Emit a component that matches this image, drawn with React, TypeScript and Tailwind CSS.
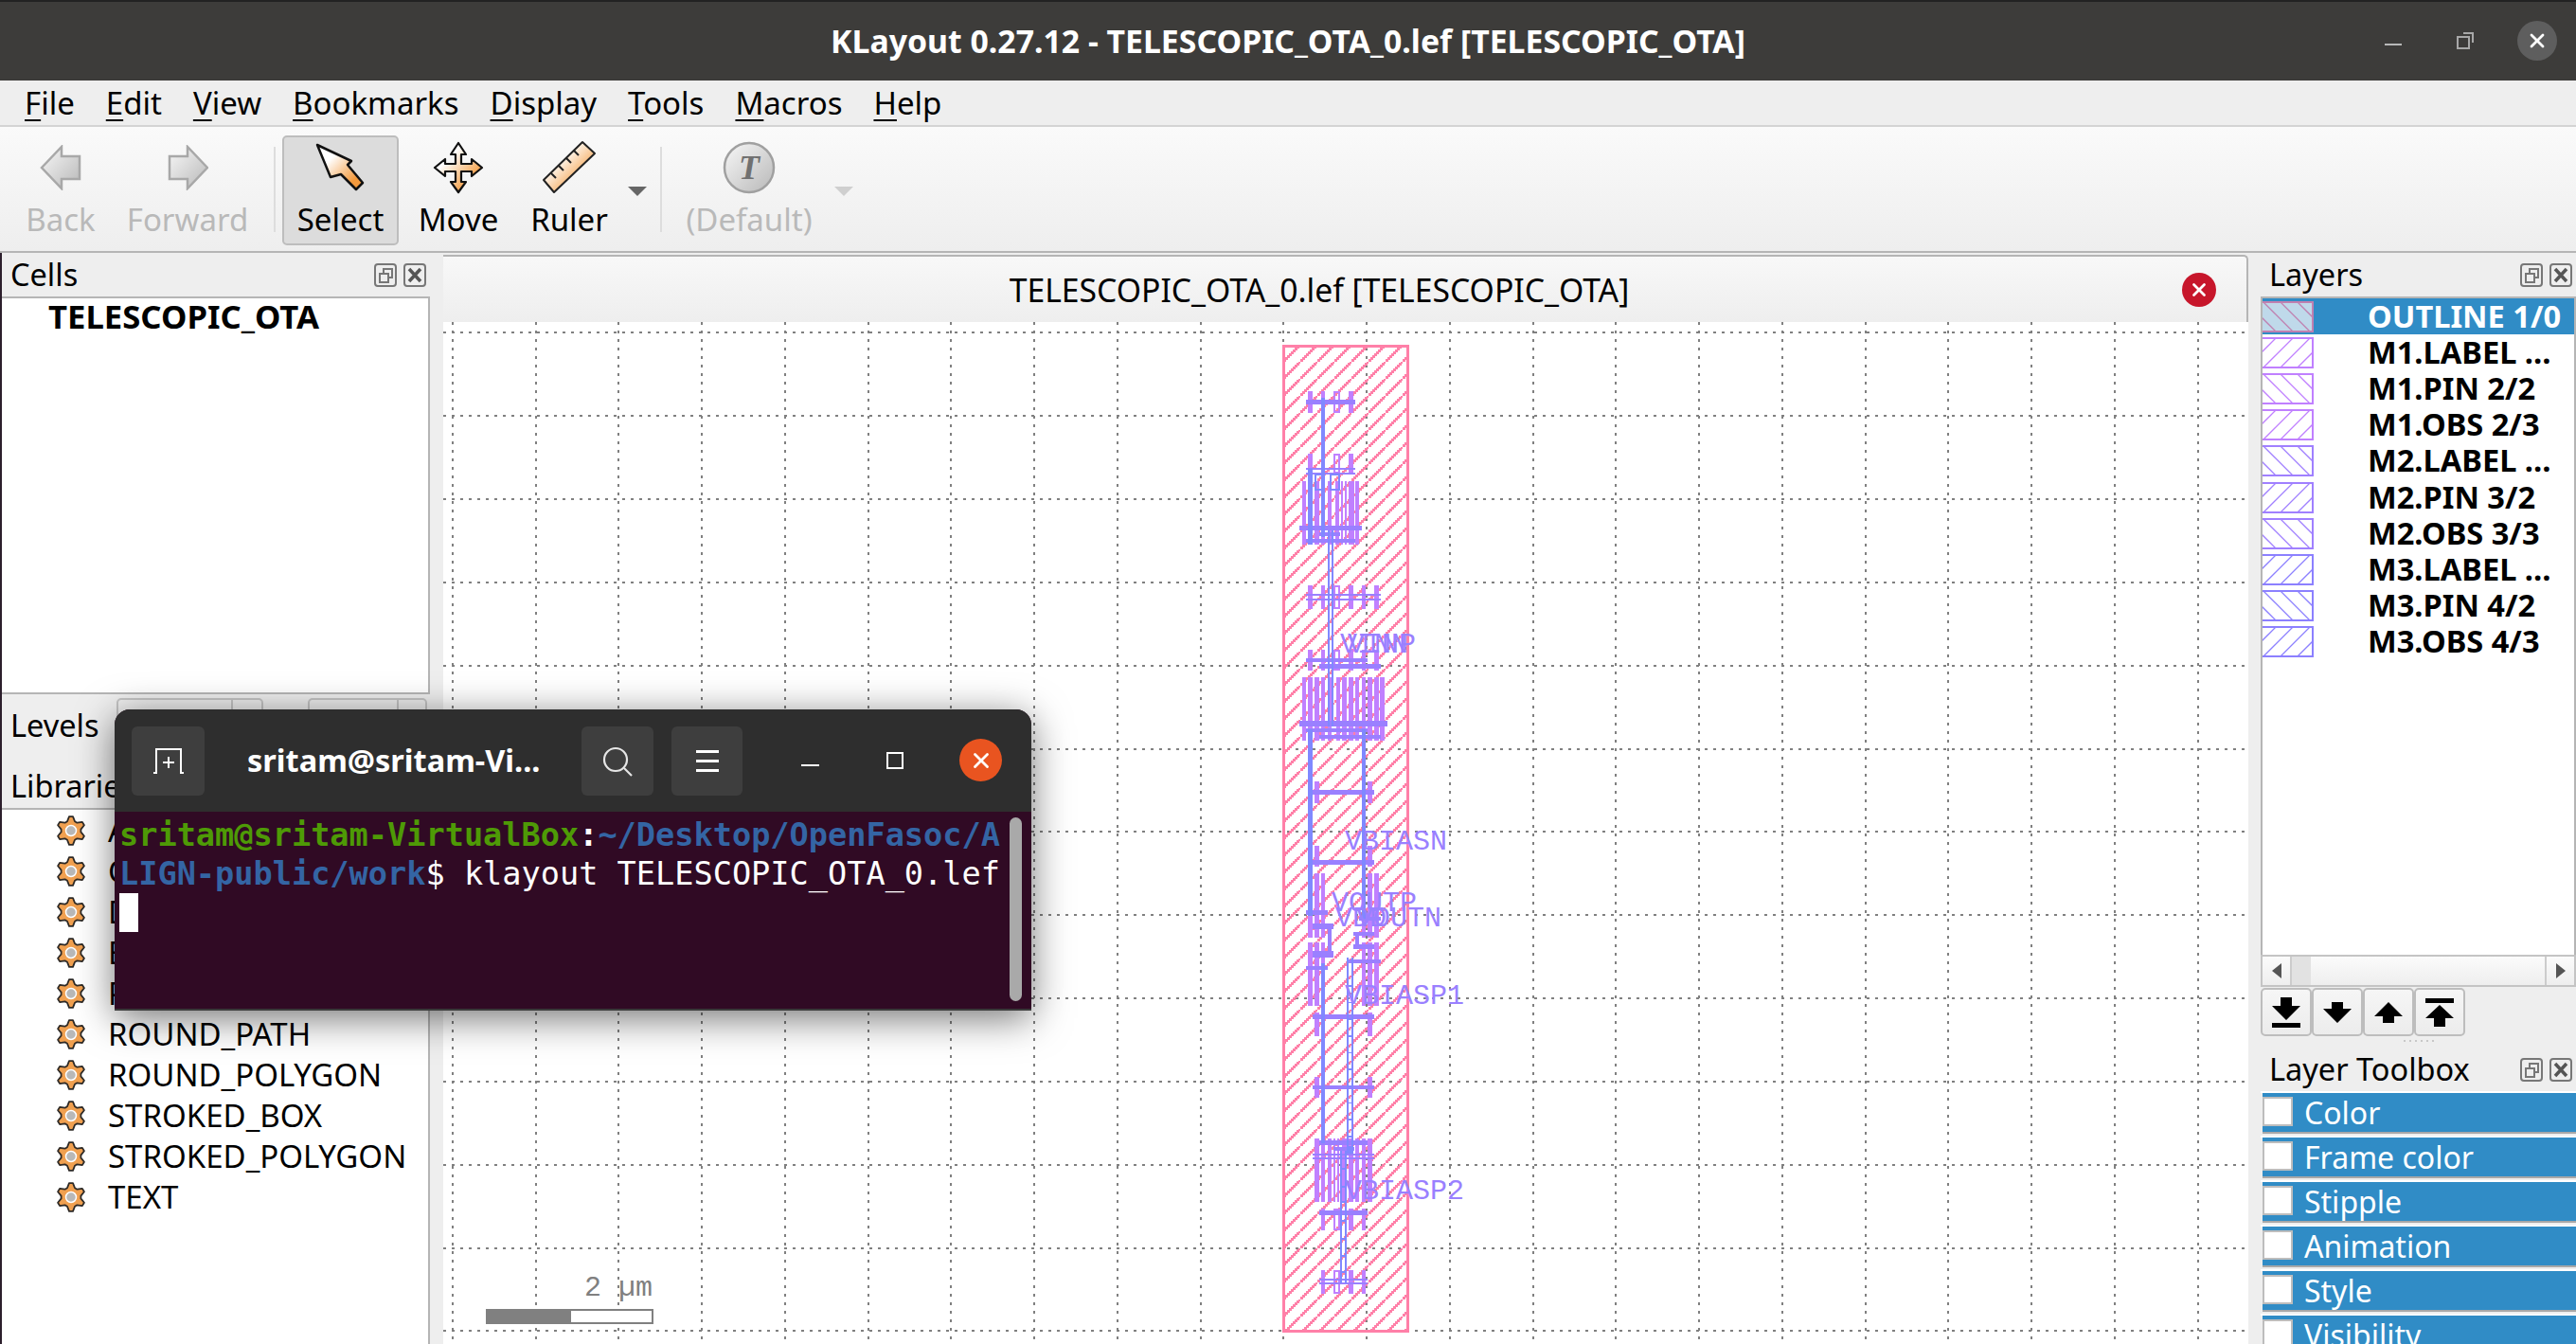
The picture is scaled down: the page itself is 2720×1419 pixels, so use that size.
import { X } from "lucide-react";

type Box = [number, number, number, number];

const M1 = "#c080ff";
const M2 = "#9a80ff";
const M3 = "#8088ff";

// layout shapes, coordinates are in 3x crop pixels [x1, x2, y1, y2]
const bars = (xs: [number, number][], y1: number, y2: number): Box[] =>
  xs.map(([a, b]) => [a, b, y1, y2]);

const top = {
  offset: 340,
  m1: [
    ...bars([[243, 258], [285, 297], [372, 387]], 219, 288),
    ...bars([[243, 258], [372, 387]], 417, 480),
    ...bars([[225, 238], [243, 258], [264, 280], [285, 297], [306, 318], [330, 342], [348, 354], [360, 366], [372, 390], [393, 405]], 504, 705),
    ...bars([[243, 258], [285, 297], [372, 387], [414, 426], [453, 468]], 834, 909),
    ...bars([[243, 258], [285, 297], [372, 387], [414, 426], [453, 468]], 1038, 1104),
  ] as Box[],
  hollow1: [[324, 345, 219, 288], [324, 345, 417, 480], [324, 345, 834, 909], [324, 345, 1038, 1104]] as Box[],
  m2: [
    [237, 393, 246, 261], [237, 393, 462, 468], [237, 393, 477, 483], [216, 414, 645, 660], [237, 393, 687, 699], [279, 345, 666, 678],
    [237, 474, 861, 867], [237, 474, 876, 882], [237, 432, 1065, 1077], [279, 474, 1083, 1098],
  ] as Box[],
  m3: [[285, 297, 240, 530], [243, 258, 465, 705], [285, 297, 465, 680], [306, 312, 660, 1020], [318, 324, 660, 1020]] as Box[],
  hollow3: [[264, 297, 480, 534], [312, 345, 480, 534]] as Box[],
};

const mid = {
  offset: 680,
  m1: [
    ...bars([[225, 238], [243, 258], [264, 280], [285, 297], [306, 318], [333, 345], [351, 366], [372, 387], [393, 405], [414, 426], [432, 447], [453, 468], [472, 486]], 105, 305),
    ...bars([[264, 279], [432, 447]], 435, 504),
    ...bars([[264, 279], [432, 447]], 640, 705),
    ...bars([[243, 258], [264, 279], [285, 297], [414, 426], [432, 447], [453, 468]], 726, 930),
    ...bars([[243, 258], [264, 279], [285, 297], [414, 426], [432, 447], [453, 468]], 945, 1146),
  ] as Box[],
  hollow1: [] as Box[],
  m2: [
    [216, 495, 243, 261], [237, 432, 267, 279], [279, 474, 288, 300], [258, 453, 462, 477], [258, 453, 684, 699],
    [237, 306, 843, 858], [405, 474, 864, 876], [258, 324, 885, 903], [387, 453, 912, 924],
    [258, 324, 972, 993], [387, 453, 951, 966], [237, 306, 1020, 1032], [366, 474, 999, 1011], [306, 318, 900, 975], [393, 405, 924, 951],
  ] as Box[],
  m3: [[306, 312, 0, 260], [318, 324, 0, 260], [243, 258, 270, 860], [414, 426, 270, 870], [285, 297, 1010, 1200], [366, 372, 993, 1200], [381, 387, 993, 1200]] as Box[],
  hollow3: [] as Box[],
};

const low = {
  offset: 1020,
  m1: [
    ...bars([[264, 279], [432, 447]], 148, 222),
    ...bars([[264, 279], [432, 447]], 351, 417),
    ...bars([[264, 279], [285, 297], [306, 318], [324, 330], [336, 342], [351, 366], [372, 387], [393, 405], [414, 426], [432, 447]], 546, 747),
    ...bars([[285, 297], [372, 387], [414, 426]], 768, 837),
    ...bars([[285, 297], [372, 387], [414, 426]], 963, 1038),
  ] as Box[],
  hollow1: [[324, 345, 768, 837], [324, 345, 963, 1038]] as Box[],
  m2: [
    [258, 453, 153, 168], [258, 453, 378, 390], [279, 432, 552, 567], [324, 390, 573, 585], [258, 453, 594, 600], [258, 453, 606, 612],
    [279, 432, 774, 789], [279, 432, 990, 996], [279, 432, 1002, 1008],
  ] as Box[],
  m3: [[285, 297, 0, 560], [366, 372, 0, 590], [381, 387, 0, 590], [345, 351, 585, 1005], [360, 366, 585, 1005], [366, 387, 570, 594]] as Box[],
  hollow3: [] as Box[],
};

const ladder = [...Array(11).keys()].map((i) => 60 + i * 53);

function Rects({ items, fill }: { items: Box[]; fill: string }) {
  return (
    <>
      {items.map(([a, b, c, d], i) => (
        <rect key={i} x={a} y={c} width={b - a} height={d - c} fill={fill} />
      ))}
    </>
  );
}

function Hollow({ items, stroke }: { items: Box[]; stroke: string }) {
  return (
    <>
      {items.map(([a, b, c, d], i) => (
        <rect key={i} x={a + 3} y={c + 3} width={b - a - 6} height={d - c - 6} fill="none" stroke={stroke} strokeWidth={6} />
      ))}
    </>
  );
}

function Canvas() {
  const vertical = [...Array(22).keys()].map((k) => Math.round(477.8 + 87.75 * k));
  const horizontal = [...Array(13).keys()].map((k) => Math.round(351.3 + 87.85 * k));
  const steps = [...Array(9).keys()];
  return (
    <svg viewBox="468 340 1906 1079" className="block h-[1079px] w-[1906px]" shapeRendering="crispEdges">
      <defs>
        <pattern id="outline" x="1355" y="364" width="18" height="18" patternUnits="userSpaceOnUse">
          {steps.map((i) => (
            <rect key={i} x={i * 2} y={15 - i * 2} width="3" height="3" fill="#ff80a8" />
          ))}
        </pattern>
      </defs>
      <rect x="468" y="340" width="1906" height="1079" fill="#ffffff" />
      {horizontal.map((y) => (
        <line key={y} x1="468" x2="2374" y1={y} y2={y} stroke="#808080" strokeWidth="2" strokeDasharray="3 6" />
      ))}
      <rect x="1348" y="400" width="146" height="240" fill="#ffffff" />
      {vertical.map((x) => (
        <line key={x} x1={x} x2={x} y1="340" y2="1419" stroke="#808080" strokeWidth="2" strokeDasharray="3 6" />
      ))}
      <rect x="1355" y="365" width="131" height="1040" fill="url(#outline)" stroke="#ff80a8" strokeWidth="3" />

      {[top, mid, low].map((g) => (
        <g key={g.offset} transform={`translate(1300 ${g.offset}) scale(0.3333)`}>
          <Rects items={g.m1} fill={M1} />
          <Hollow items={g.hollow1} stroke={M1} />
          <Rects items={g.m2} fill={M2} />
          <Rects items={g.m3} fill={M3} />
          <Hollow items={g.hollow3} stroke={M3} />
        </g>
      ))}
      <g transform="translate(1300 1020) scale(0.3333)">
        {ladder.map((y) => (
          <rect key={y} x="366" y={y} width="21" height="5" fill={M3} />
        ))}
        {[640, 695, 745, 805, 860, 915, 965].map((y) => (
          <rect key={y} x="345" y={y} width="21" height="6" fill={M3} />
        ))}
      </g>

      <g shapeRendering="auto" fontFamily="'Liberation Mono', monospace" fontSize="30" fill="#9a80ff">
        <text x="1415" y="689">VINN</text>
        <text x="1423" y="689">VINP</text>
        <text x="1420" y="897">VBIASN</text>
        <text x="1406" y="962">VOUTP</text>
        <text x="1410" y="978">VDD</text>
        <text x="1432" y="978">VOUTN</text>
        <text x="1420" y="1060">VBIASP1</text>
        <text x="1420" y="1266">VBIASP2</text>
      </g>

      <text x="617" y="1368" shapeRendering="auto" fontFamily="'Liberation Mono', monospace" fontSize="30" fill="#808080">2 µm</text>
      <rect x="514" y="1383" width="175" height="14" fill="#ffffff" stroke="#808080" strokeWidth="2" />
      <rect x="513" y="1382" width="90" height="16" fill="#808080" />
    </svg>
  );
}

function Mnemonic({ text }: { text: string }) {
  return (
    <span>
      <span className="underline decoration-2 underline-offset-[5px]">{text[0]}</span>
      {text.slice(1)}
    </span>
  );
}

function FloatButtons() {
  return (
    <div className="flex gap-[7px]">
      <svg width="24" height="25" viewBox="0 0 24 25" fill="none" stroke="#777777" strokeWidth="2">
        <rect x="1" y="1" width="22" height="23" rx="3" />
        <rect x="6" y="11" width="9" height="9" />
        <path d="M10 10V6h9v9h-4" />
      </svg>
      <svg width="24" height="25" viewBox="0 0 24 25" fill="none" stroke="#777777" strokeWidth="2">
        <rect x="1" y="1" width="22" height="23" rx="3" />
        <path d="M6 6l12 13M18 6L6 19" strokeWidth="3.5" stroke="#555555" />
      </svg>
    </div>
  );
}

function PanelTitle({ title }: { title: string }) {
  return (
    <div className="flex h-[46px] shrink-0 items-center justify-between pl-[9px] pr-[4px] text-[32.5px]">
      <span>{title}</span>
      <FloatButtons />
    </div>
  );
}

function Gear() {
  const pts: string[] = [];
  for (let i = 0; i < 24; i++) {
    const r = i % 4 < 2 ? 15 : 10.5;
    const a = ((i - 0.5) / 24) * Math.PI * 2 - Math.PI / 2;
    pts.push(`${(16 + r * Math.cos(a)).toFixed(1)},${(16 + r * Math.sin(a)).toFixed(1)}`);
  }
  return (
    <svg width="32" height="32" viewBox="0 0 32 32" className="shrink-0">
      <polygon points={pts.join(" ")} fill="#f0a050" stroke="#2e2a26" strokeWidth="1.8" strokeLinejoin="round" />
      <circle cx="16" cy="16" r="5.5" fill="#b8b8b8" stroke="#ffffff" strokeWidth="1.5" />
    </svg>
  );
}

function ToolButton({ label, width, active, disabled, ml, children }: { label: string; width: number; active?: boolean; disabled?: boolean; ml?: string; children: React.ReactNode }) {
  return (
    <div
      className={`flex h-[116px] shrink-0 flex-col items-center rounded-[5px] border-2 pt-[4px] ${ml ?? ""} ${active ? "border-[#bdbdbd] bg-[#dcdcdc]" : "border-transparent"} ${disabled ? "text-[#b9b9b9]" : "text-black"}`}
      style={{ width }}
    >
      <div className="flex h-[56px] items-center justify-center">{children}</div>
      <span className="mt-[7px] text-[33px] leading-[40px]">{label}</span>
    </div>
  );
}

function ArrowDefs() {
  return (
    <svg width="0" height="0" className="absolute">
      <defs>
        <linearGradient id="tool" x1="0" y1="0" x2="1" y2="1">
          <stop offset="0.3" stopColor="#ffffff" />
          <stop offset="0.8" stopColor="#f39a3d" />
        </linearGradient>
        <linearGradient id="gray" x1="0" y1="0" x2="1" y2="1">
          <stop offset="0" stopColor="#f8f8f8" />
          <stop offset="1" stopColor="#b8b8b8" />
        </linearGradient>
      </defs>
    </svg>
  );
}

function Toolbar() {
  return (
    <div className="flex h-[135px] items-start border-y-2 border-y-[#d4d4d4] border-b-[#b5b5b5] bg-gradient-to-b from-[#fafafa] to-[#eeeeee] pl-[18px] pt-[9px]">
      <ToolButton label="Back" width={92} disabled>
        <svg width="44" height="48" viewBox="41 153 44 48">
          <polygon points="43,177 64,155 64,165 83,165 83,189 64,189 64,199" fill="url(#gray)" stroke="#a8a8a8" strokeWidth="2.5" />
        </svg>
      </ToolButton>
      <ToolButton label="Forward" width={132} disabled ml="ml-[22px]">
        <svg width="44" height="48" viewBox="175 153 44 48">
          <polygon points="218,177 197,155 197,165 178,165 178,189 197,189 197,199" fill="url(#gray)" stroke="#a8a8a8" strokeWidth="2.5" />
        </svg>
      </ToolButton>
      <div className="ml-[25px] mt-[12px] h-[90px] w-[2px] shrink-0 bg-[#dddddd]" />
      <ToolButton label="Select" width={123} active ml="ml-[7px]">
        <svg width="56" height="54" viewBox="332 150 56 54">
          <polygon points="335,153 371,170 367,174 383,193 376,200 360,184 349,187" fill="url(#tool)" stroke="#111111" strokeWidth="2.5" strokeLinejoin="round" />
        </svg>
      </ToolButton>
      <ToolButton label="Move" width={122} ml="ml-[2px]">
        <svg width="56" height="56" viewBox="455 148 56 56">
          <polygon points="483,150 491,162 486,162 486,172 497,172 497,167 508,176 497,185 497,180 486,180 486,191 491,191 483,202 475,191 480,191 480,180 469,180 469,185 458,176 469,167 469,172 480,172 480,162 475,162" fill="url(#tool)" stroke="#111111" strokeWidth="2.2" strokeLinejoin="round" />
        </svg>
      </ToolButton>
      <ToolButton label="Ruler" width={112}>
        <svg width="58" height="58" viewBox="572 148 58 58">
          <polygon points="574,190 615,150 628,162 585,203" fill="url(#tool)" stroke="#222222" strokeWidth="2" strokeLinejoin="round" />
          <path d="M582 183l5 5M590 175l5 5M598 167l5 5M606 159l5 5" stroke="#222222" strokeWidth="2" />
        </svg>
      </ToolButton>
      <svg width="20" height="10" viewBox="0 0 20 10" className="ml-[6px] mt-[54px] shrink-0">
        <polygon points="0,0 20,0 10,10" fill="#666666" />
      </svg>
      <div className="ml-[14px] mt-[12px] h-[90px] w-[2px] shrink-0 bg-[#dddddd]" />
      <ToolButton label="(Default)" width={136} disabled ml="ml-[24px]">
        <svg width="56" height="56" viewBox="0 0 56 56">
          <circle cx="28" cy="28" r="26" fill="url(#gray)" stroke="#a0a0a0" strokeWidth="2.5" />
          <text x="28" y="40" textAnchor="middle" fontFamily="'Liberation Serif', serif" fontWeight="700" fontStyle="italic" fontSize="36" fill="#707070">T</text>
        </svg>
      </ToolButton>
      <svg width="20" height="10" viewBox="0 0 20 10" className="ml-[22px] mt-[54px] shrink-0">
        <polygon points="0,0 20,0 10,10" fill="#cfcfcf" />
      </svg>
    </div>
  );
}

const libraryItems = ["ARC", "CIRCLE", "DONUT", "ELLIPSE", "PIE", "ROUND_PATH", "ROUND_POLYGON", "STROKED_BOX", "STROKED_POLYGON", "TEXT"];

function LeftPanel() {
  return (
    <div className="flex w-[468px] shrink-0 flex-col border-l-2 border-l-[#2c1f2c] pr-[14px]">
      <PanelTitle title="Cells" />
      <div className="h-[420px] shrink-0 border-2 border-l-0 border-[#b5b5b5] bg-white pl-[49px] text-[34.7px] font-bold leading-[38px]">
        TELESCOPIC_OTA
      </div>
      <div className="relative h-[64px] shrink-0">
        <span className="absolute left-[9px] top-[9px] text-[32.5px]">Levels</span>
        <div className="absolute left-[121px] top-[4px] flex h-[50px] w-[155px] justify-end rounded-t-[5px] border-2 border-[#c4c4c4]">
          <div className="w-[32px] border-l-2 border-[#c4c4c4]" />
        </div>
        <div className="absolute left-[323px] top-[4px] flex h-[50px] w-[126px] justify-end rounded-t-[5px] border-2 border-[#c4c4c4]">
          <div className="w-[30px] border-l-2 border-[#c4c4c4]" />
        </div>
      </div>
      <div className="flex h-[56px] shrink-0 items-center pl-[9px] pt-[10px] text-[32.5px]">Libraries</div>
      <div className="flex-1 border-2 border-b-0 border-l-0 border-[#b5b5b5] bg-white pl-[57px]">
        {libraryItems.map((name) => (
          <div key={name} className="flex h-[43px] items-center gap-[23px] text-[33px]">
            <Gear />
            <span>{name}</span>
          </div>
        ))}
      </div>
    </div>
  );
}

const layers = [
  { label: "OUTLINE 1/0", color: "#c080b0", back: true, selected: true },
  { label: "M1.LABEL …", color: "#c080ff", back: false },
  { label: "M1.PIN 2/2", color: "#c080ff", back: true },
  { label: "M1.OBS 2/3", color: "#c080ff", back: false },
  { label: "M2.LABEL …", color: "#a080ff", back: true },
  { label: "M2.PIN 3/2", color: "#a080ff", back: false },
  { label: "M2.OBS 3/3", color: "#a080ff", back: true },
  { label: "M3.LABEL …", color: "#8c80ff", back: false },
  { label: "M3.PIN 4/2", color: "#8c80ff", back: true },
  { label: "M3.OBS 4/3", color: "#8c80ff", back: false },
];

function Swatch({ color, back, selected }: { color: string; back?: boolean; selected?: boolean }) {
  const offsets = [-36, -18, 0, 18, 36, 54];
  return (
    <svg width="54" height="33" viewBox="0 0 54 33" className="shrink-0" shapeRendering="crispEdges">
      <rect width="54" height="33" fill={selected ? "#bfd9ea" : "#ffffff"} />
      {offsets.map((o) => (
        <line key={o} x1={back ? o : o + 33} y1="0" x2={back ? o + 33 : o} y2="33" stroke={color} strokeWidth="1.3" shapeRendering="auto" />
      ))}
      <path d="M0 1H53V32H0" fill="none" stroke={color} strokeWidth="2" />
    </svg>
  );
}

function ScrollArrow({ dir }: { dir: "left" | "right" }) {
  return (
    <svg width="10" height="16" viewBox="0 0 10 16">
      <polygon points={dir === "left" ? "10,0 10,16 0,8" : "0,0 0,16 10,8"} fill="#555555" />
    </svg>
  );
}

function OrderButton({ children }: { children: React.ReactNode }) {
  return (
    <div className="flex h-[51px] w-[54px] items-center justify-center rounded-[5px] border-2 border-[#bdbdbd] bg-gradient-to-b from-[#f6f6f6] to-[#ececec]">
      {children}
    </div>
  );
}

function RightPanel() {
  return (
    <div className="flex w-[346px] shrink-0 flex-col pl-[13px]">
      <PanelTitle title="Layers" />
      <div className="flex h-[695px] shrink-0 flex-col border-2 border-b-0 border-[#b5b5b5] bg-white">
        {layers.map((l) => (
          <div key={l.label} className={`flex h-[38.2px] shrink-0 items-center ${l.selected ? "bg-[#308cc6] text-white" : "text-black"}`}>
            <Swatch color={l.color} back={l.back} selected={l.selected} />
            <span className="ml-[57px] whitespace-nowrap text-[32.6px] font-bold">{l.label}</span>
          </div>
        ))}
      </div>
      <div className="flex h-[34px] shrink-0 items-stretch border-2 border-[#c4c4c4] bg-gradient-to-b from-[#fbfbfb] to-[#eeeeee]">
        <div className="flex w-[31px] items-center justify-center border-r-2 border-[#cccccc]">
          <ScrollArrow dir="left" />
        </div>
        <div className="w-[20px] bg-[#e2e2e2]" />
        <div className="flex-1" />
        <div className="flex w-[31px] items-center justify-center border-l-2 border-[#cccccc]">
          <ScrollArrow dir="right" />
        </div>
      </div>
      <div className="mt-[1px] flex shrink-0">
        <OrderButton>
          <svg width="30" height="32" viewBox="0 0 30 32">
            <path d="M9 0h12v9h9L15 24 0 9h9zM0 27h30v5H0z" />
          </svg>
        </OrderButton>
        <OrderButton>
          <svg width="30" height="22" viewBox="0 0 30 22">
            <path d="M9 0h12v7h9L15 22 0 7h9z" />
          </svg>
        </OrderButton>
        <OrderButton>
          <svg width="30" height="22" viewBox="0 0 30 22">
            <path d="M9 22h12v-7h9L15 0 0 15h9z" />
          </svg>
        </OrderButton>
        <OrderButton>
          <svg width="30" height="30" viewBox="0 0 30 30">
            <path d="M0 0h30v5H0zM9 30h12v-9h9L15 7 0 21h9z" />
          </svg>
        </OrderButton>
      </div>
      <div className="flex h-[12px] shrink-0 justify-center gap-[4px] pt-[4px]">
        {[0, 1, 2, 3, 4, 5].map((d) => (
          <span key={d} className="h-[2px] w-[2px] bg-[#c8c8c8]" />
        ))}
      </div>
      <PanelTitle title="Layer Toolbox" />
      <div className="flex shrink-0 flex-col">
        {["Color", "Frame color", "Stipple", "Animation", "Style", "Visibility"].map((t) => (
          <div key={t} className="h-[47px] shrink-0 border-t-2 border-white pl-[2px]">
            <div className="flex h-[43px] items-start border-b-2 border-[#a8a8a8] bg-[#308cc6] text-[32px] leading-[42px] text-white">
              <div className="mt-[4px] h-[31px] w-[32px] shrink-0 border-2 border-[#bdbdbd] bg-white" />
              <span className="ml-[12px]">{t}</span>
            </div>
          </div>
        ))}
      </div>
    </div>
  );
}

function Terminal() {
  return (
    <div className="absolute left-[121px] top-[749px] h-[318px] w-[968px] overflow-hidden rounded-t-[16px] border-b-2 border-b-[#3a3a3a] bg-[#300a24] shadow-[0_8px_40px_rgba(0,0,0,0.55)]">
      <div className="relative flex h-[108px] items-center bg-[#2e2e2e] text-white">
        <div className="ml-[18px] flex h-[73px] w-[77px] items-center justify-center rounded-[6px] bg-[#3e3e3e]">
          <svg width="32" height="27" viewBox="0 0 32 27" fill="none" stroke="#ffffff" strokeWidth="2">
            <path d="M0 26h3V1h26v25h3M16 9v12M10 15h12" />
          </svg>
        </div>
        <span className="ml-[45px] whitespace-nowrap text-[32.5px] font-bold">sritam@sritam-Vi...</span>
        <div className="absolute left-[493px] top-[18px] flex h-[73px] w-[76px] items-center justify-center rounded-[6px] bg-[#3e3e3e]">
          <svg width="34" height="34" viewBox="0 0 34 34" fill="none" stroke="#e6e6e6" strokeWidth="2.2">
            <circle cx="15" cy="15" r="12" />
            <path d="M24 24l8 8" />
          </svg>
        </div>
        <div className="absolute left-[588px] top-[18px] flex h-[73px] w-[75px] flex-col items-center justify-center gap-[7px] rounded-[6px] bg-[#3e3e3e]">
          <span className="h-[3px] w-[24px] bg-white" />
          <span className="h-[3px] w-[24px] bg-white" />
          <span className="h-[3px] w-[24px] bg-white" />
        </div>
        <span className="absolute left-[725px] top-[58px] h-[2px] w-[19px] bg-white" />
        <span className="absolute left-[815px] top-[45px] h-[18px] w-[18px] border-2 border-white" />
        <div className="absolute left-[892px] top-[31px] flex h-[45px] w-[45px] items-center justify-center rounded-full bg-[#e95420]">
          <X size={26} strokeWidth={2.6} color="#ffffff" />
        </div>
      </div>
      <div className="pl-[5px] pt-[5px] font-['DejaVu_Sans_Mono',monospace] text-[33.6px] leading-[40.5px] whitespace-pre">
        <div className="font-bold">
          <span className="text-[#4e9a06]">sritam@sritam-VirtualBox</span>
          <span className="text-white">:</span>
          <span className="text-[#3465a4]">~/Desktop/OpenFasoc/A</span>
        </div>
        <div>
          <span className="font-bold text-[#3465a4]">LIGN-public/work</span>
          <span className="text-white">$ klayout TELESCOPIC_OTA_0.lef</span>
        </div>
        <div className="h-[41px] w-[20px] bg-white" />
      </div>
      <div className="absolute left-[945px] top-[114px] h-[194px] w-[13px] rounded-full bg-[#a9a9a9]" />
    </div>
  );
}

export default function App() {
  return (
    <div className="relative h-[1419px] w-[2720px] overflow-hidden bg-[#eeeeee] font-['Noto_Sans','Liberation_Sans',sans-serif] text-black">
      <ArrowDefs />
      {/* title bar */}
      <div className="relative flex h-[85px] items-center justify-center border-t-2 border-t-[#222222] bg-[#3d3c3a]">
        <span className="text-[33.8px] font-bold text-white">KLayout 0.27.12 - TELESCOPIC_OTA_0.lef [TELESCOPIC_OTA]</span>
        <div className="absolute right-[20px] top-[20px] flex items-center">
          <span className="mr-[58px] mt-[7px] h-[2px] w-[18px] bg-[#b8b8b8]" />
          <svg width="18" height="18" viewBox="0 0 18 18" fill="none" stroke="#a8a8a8" strokeWidth="2" className="mr-[46px]">
            <rect x="1" y="5" width="12" height="12" />
            <path d="M7 1h10v10" />
          </svg>
          <div className="flex h-[42px] w-[42px] items-center justify-center rounded-full bg-[#5e5e5e]">
            <X size={24} strokeWidth={2.8} color="#ffffff" />
          </div>
        </div>
      </div>
      {/* menu */}
      <div className="flex h-[47px] items-center gap-[33px] pl-[26px] text-[33px]">
        {["File", "Edit", "View", "Bookmarks", "Display", "Tools", "Macros", "Help"].map((m) => (
          <Mnemonic key={m} text={m} />
        ))}
      </div>
      <Toolbar />
      <div className="flex h-[1152px]">
        <LeftPanel />
        <div className="w-[1906px] shrink-0 pt-[2px]">
          <div className="flex h-[71px] items-center rounded-tr-[5px] border-r-2 border-t-2 border-[#b5b5b5] bg-gradient-to-b from-[#f8f8f8] to-[#eeeeee] text-[33.7px]">
            <span className="flex-1 pl-[14px] pt-[2px] text-center">TELESCOPIC_OTA_0.lef [TELESCOPIC_OTA]</span>
            <div className="mr-[32px] flex h-[36px] w-[36px] items-center justify-center rounded-full bg-[#c7162b]">
              <X size={22} strokeWidth={3} color="#ffffff" />
            </div>
          </div>
          <Canvas />
        </div>
        <RightPanel />
      </div>
      <Terminal />
    </div>
  );
}
